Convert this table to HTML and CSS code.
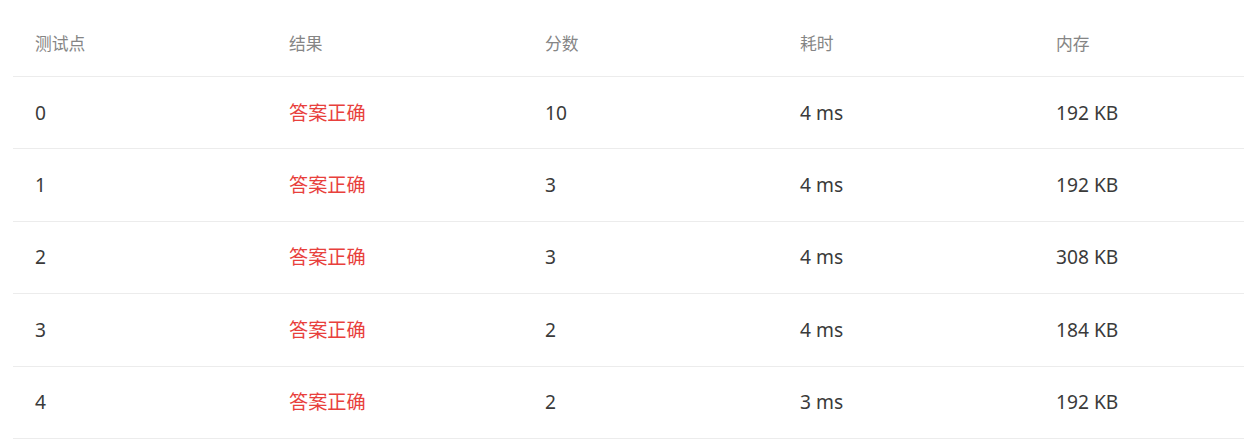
FILE: index.html
```html
<!DOCTYPE html>
<html lang="zh-CN">
<head>
<meta charset="utf-8">
<title>测试点</title>
<link rel="stylesheet" href="styles.css">
</head>
<body>
<div class="table">
  <div class="row head">
    <div class="cell">测试点</div>
    <div class="cell">结果</div>
    <div class="cell">分数</div>
    <div class="cell">耗时</div>
    <div class="cell">内存</div>
  </div>
  <div class="row body">
    <div class="cell">0</div>
    <div class="cell ok">答案正确</div>
    <div class="cell">10</div>
    <div class="cell">4 ms</div>
    <div class="cell">192 KB</div>
  </div>
  <div class="row body">
    <div class="cell">1</div>
    <div class="cell ok">答案正确</div>
    <div class="cell">3</div>
    <div class="cell">4 ms</div>
    <div class="cell">192 KB</div>
  </div>
  <div class="row body">
    <div class="cell">2</div>
    <div class="cell ok">答案正确</div>
    <div class="cell">3</div>
    <div class="cell">4 ms</div>
    <div class="cell">308 KB</div>
  </div>
  <div class="row body">
    <div class="cell">3</div>
    <div class="cell ok">答案正确</div>
    <div class="cell">2</div>
    <div class="cell">4 ms</div>
    <div class="cell">184 KB</div>
  </div>
  <div class="row body">
    <div class="cell">4</div>
    <div class="cell ok">答案正确</div>
    <div class="cell">2</div>
    <div class="cell">3 ms</div>
    <div class="cell">192 KB</div>
  </div>
</div>
</body>
</html>
```
FILE: styles.css
```css
html, body {
  margin: 0;
  padding: 0;
  background: #fff;
}
body {
  font-family: "Noto Sans", "Noto Sans CJK SC", sans-serif;
  color: #333;
}
.table {
  margin-left: 13px;
  width: 1231px;
}
.row {
  display: grid;
  grid-template-columns: 254px 256px 255px 256px 1fr;
  border-bottom: 1px solid #ececec;
}
.cell {
  padding-left: 22px;
  line-height: 24px;
  white-space: nowrap;
}
.head {
  height: 77px;
  box-sizing: border-box;
  padding-top: 32px;
}
.head .cell {
  font-size: 16.8px;
  color: #858585;
}
.body {
  height: 72.4px;
  box-sizing: border-box;
  align-items: center;
}
.body .cell {
  font-size: 19.2px;
  color: #3a3a3a;
}
.body .cell.ok {
  color: #e8403c;
}
```
